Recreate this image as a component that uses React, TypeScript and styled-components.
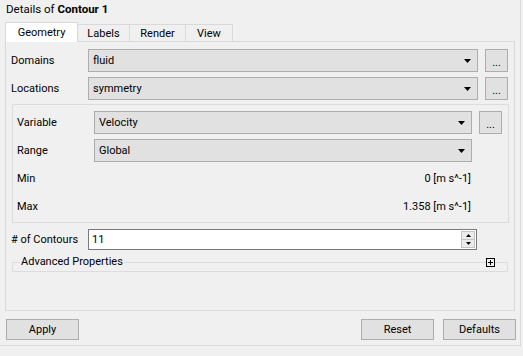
import React from 'react';
import styled, { createGlobalStyle } from 'styled-components';

const Global = createGlobalStyle`
  html, body { margin: 0; padding: 0; background: #f0f0f0; }
  body { font-family: Roboto, "Noto Sans", sans-serif; font-size: 11px; color: #000; }
  * { box-sizing: border-box; }
`;

const Frame = styled.div`
  width: 521px;
  height: 346px;
  border-right: 1px solid #dadada;
  border-bottom: 1px solid #dadada;
  display: flex;
  flex-direction: column;
`;

const Title = styled.div`
  height: 22px;
  padding: 1px 0 0 6px;
  line-height: 16px;
  font-size: 11.5px;
  b { font-weight: 700; }
`;

const TabBar = styled.div`
  display: flex;
  align-items: flex-end;
  height: 19px;
  padding-left: 5px;
  position: relative;
  z-index: 1;
`;

const Tab = styled.div<{ $active?: boolean; $w: number }>`
  width: ${(p) => p.$w}px;
  height: ${(p) => (p.$active ? 20 : 17)}px;
  margin-bottom: ${(p) => (p.$active ? -1 : 0)}px;
  margin-left: -1px;
  &:first-child { margin-left: 0; }
  border: 1px solid #d9d9d9;
  border-bottom: 0;
  background: ${(p) => (p.$active ? '#ffffff' : '#f0f0f0')};
  display: flex;
  align-items: center;
  justify-content: center;
  padding-bottom: ${(p) => (p.$active ? 1 : 0)}px;
  position: relative;
  z-index: ${(p) => (p.$active ? 2 : 1)};
`;

const Pane = styled.div`
  margin: 0 5px;
  height: 270px;
  border: 1px solid #d9d9d9;
  background: #f0f0f0;
  padding: 7px 6px 0 5px;
  display: flex;
  flex-direction: column;
`;

const Row = styled.div<{ $h?: number; $mt?: number }>`
  display: flex;
  align-items: center;
  height: ${(p) => p.$h ?? 23}px;
  margin-top: ${(p) => p.$mt ?? 5}px;
`;

const Label = styled.div`
  width: 77px;
  flex: none;
  white-space: nowrap;
`;

const Combo = styled.div`
  flex: 1;
  height: 23px;
  background: #e1e1e1;
  border: 1px solid #adadad;
  display: flex;
  align-items: center;
  padding: 0 6px 0 4px;
  justify-content: space-between;
`;

const Value = styled.div`
  flex: 1;
  text-align: right;
  padding-right: 1px;
`;

const DotsButton = styled.div`
  width: 23px;
  height: 23px;
  flex: none;
  margin-left: 7px;
  background: #e1e1e1;
  border: 1px solid #adadad;
  display: flex;
  align-items: flex-end;
  justify-content: center;
  padding-bottom: 3px;
  line-height: 11px;
`;

const Spacer = styled.div`
  width: 30px;
  flex: none;
`;

const Group = styled.div`
  margin: 4px -1px 0 1px;
  border: 1px solid #dcdcdc;
  padding: 6px 6px 4px 4px;
  display: flex;
  flex-direction: column;
`;

const SpinBox = styled.div`
  flex: none;
  width: 389px;
  height: 21px;
  background: #fff;
  border: 1px solid #7a7a7a;
  display: flex;
  align-items: center;
  justify-content: space-between;
  padding: 0 1px 0 3px;
`;

const SpinButtons = styled.div`
  width: 14px;
  height: 17px;
  display: flex;
  flex-direction: column;
  border: 1px solid #c4c4c4;
`;

const SpinHalf = styled.div<{ $top?: boolean }>`
  flex: 1;
  background: #ececec;
  display: flex;
  align-items: center;
  justify-content: center;
  border-top: ${(p) => (p.$top ? 'none' : '1px solid #c4c4c4')};
`;

const Advanced = styled.div`
  position: relative;
  margin: 12px 0 0 1px;
  height: 10px;
  border: 1px solid #dcdcdc;
`;

const AdvTitle = styled.span`
  position: absolute;
  left: 7px;
  top: -9px;
  padding: 0 1px;
  background: #f0f0f0;
  line-height: 16px;
`;

const PlusBox = styled.div`
  position: absolute;
  left: 473px;
  top: -5px;
  width: 9px;
  height: 9px;
  border: 1px solid #000;
  background: #f0f0f0;
  &::before, &::after {
    content: '';
    position: absolute;
    background: #000;
  }
  &::before { left: 1px; top: 3px; width: 5px; height: 1px; }
  &::after { left: 3px; top: 1px; width: 1px; height: 5px; }
`;

const Footer = styled.div`
  display: flex;
  align-items: center;
  padding: 8px 4px 0 6px;
  gap: 9px;
`;

const Button = styled.div`
  width: 73px;
  height: 21px;
  background: #e1e1e1;
  border: 1px solid #adadad;
  display: flex;
  align-items: center;
  justify-content: center;
`;

const Grow = styled.div`
  flex: 1;
`;

const Arrow = ({ up = false, w = 7, h = 4 }: { up?: boolean; w?: number; h?: number }) => (
  <svg width={w} height={h} viewBox={`0 0 ${w} ${h}`} style={{ display: 'block' }}>
    <polygon
      points={up ? `0,${h} ${w},${h} ${w / 2},0` : `0,0 ${w},0 ${w / 2},${h}`}
      fill="#000"
    />
  </svg>
);

const ComboBox = ({ text }: { text: string }) => (
  <Combo>
    <span>{text}</span>
    <Arrow />
  </Combo>
);

export default function App() {
  return (
    <>
      <Global />
      <Frame>
        <Title>
          Details of <b>Contour 1</b>
        </Title>
        <TabBar>
          <Tab $active $w={73}>Geometry</Tab>
          <Tab $w={53}>Labels</Tab>
          <Tab $w={57}>Render</Tab>
          <Tab $w={48}>View</Tab>
        </TabBar>
        <Pane>
          <div>
            <Row $mt={0}>
              <Label>Domains</Label>
              <ComboBox text="fluid" />
              <DotsButton>...</DotsButton>
            </Row>
            <Row>
              <Label>Locations</Label>
              <ComboBox text="symmetry" />
              <DotsButton>...</DotsButton>
            </Row>
          </div>
          <Group>
            <Row $mt={0}>
              <Label>Variable</Label>
              <ComboBox text="Velocity" />
              <DotsButton>...</DotsButton>
            </Row>
            <Row>
              <Label>Range</Label>
              <ComboBox text="Global" />
              <Spacer />
            </Row>
            <Row>
              <Label>Min</Label>
              <Value>0 [m s^-1]</Value>
              <Spacer />
            </Row>
            <Row>
              <Label>Max</Label>
              <Value>1.358 [m s^-1]</Value>
              <Spacer />
            </Row>
          </Group>
          <Row $h={21} $mt={6}>
            <Label>#&nbsp;of Contours</Label>
            <SpinBox>
              <span>11</span>
              <SpinButtons>
                <SpinHalf $top>
                  <Arrow up w={5} h={3} />
                </SpinHalf>
                <SpinHalf>
                  <Arrow w={5} h={3} />
                </SpinHalf>
              </SpinButtons>
            </SpinBox>
          </Row>
          <Advanced>
            <AdvTitle>Advanced Properties</AdvTitle>
            <PlusBox />
          </Advanced>
        </Pane>
        <Footer>
          <Button>Apply</Button>
          <Grow />
          <Button>Reset</Button>
          <Button>Defaults</Button>
        </Footer>
      </Frame>
    </>
  );
}
